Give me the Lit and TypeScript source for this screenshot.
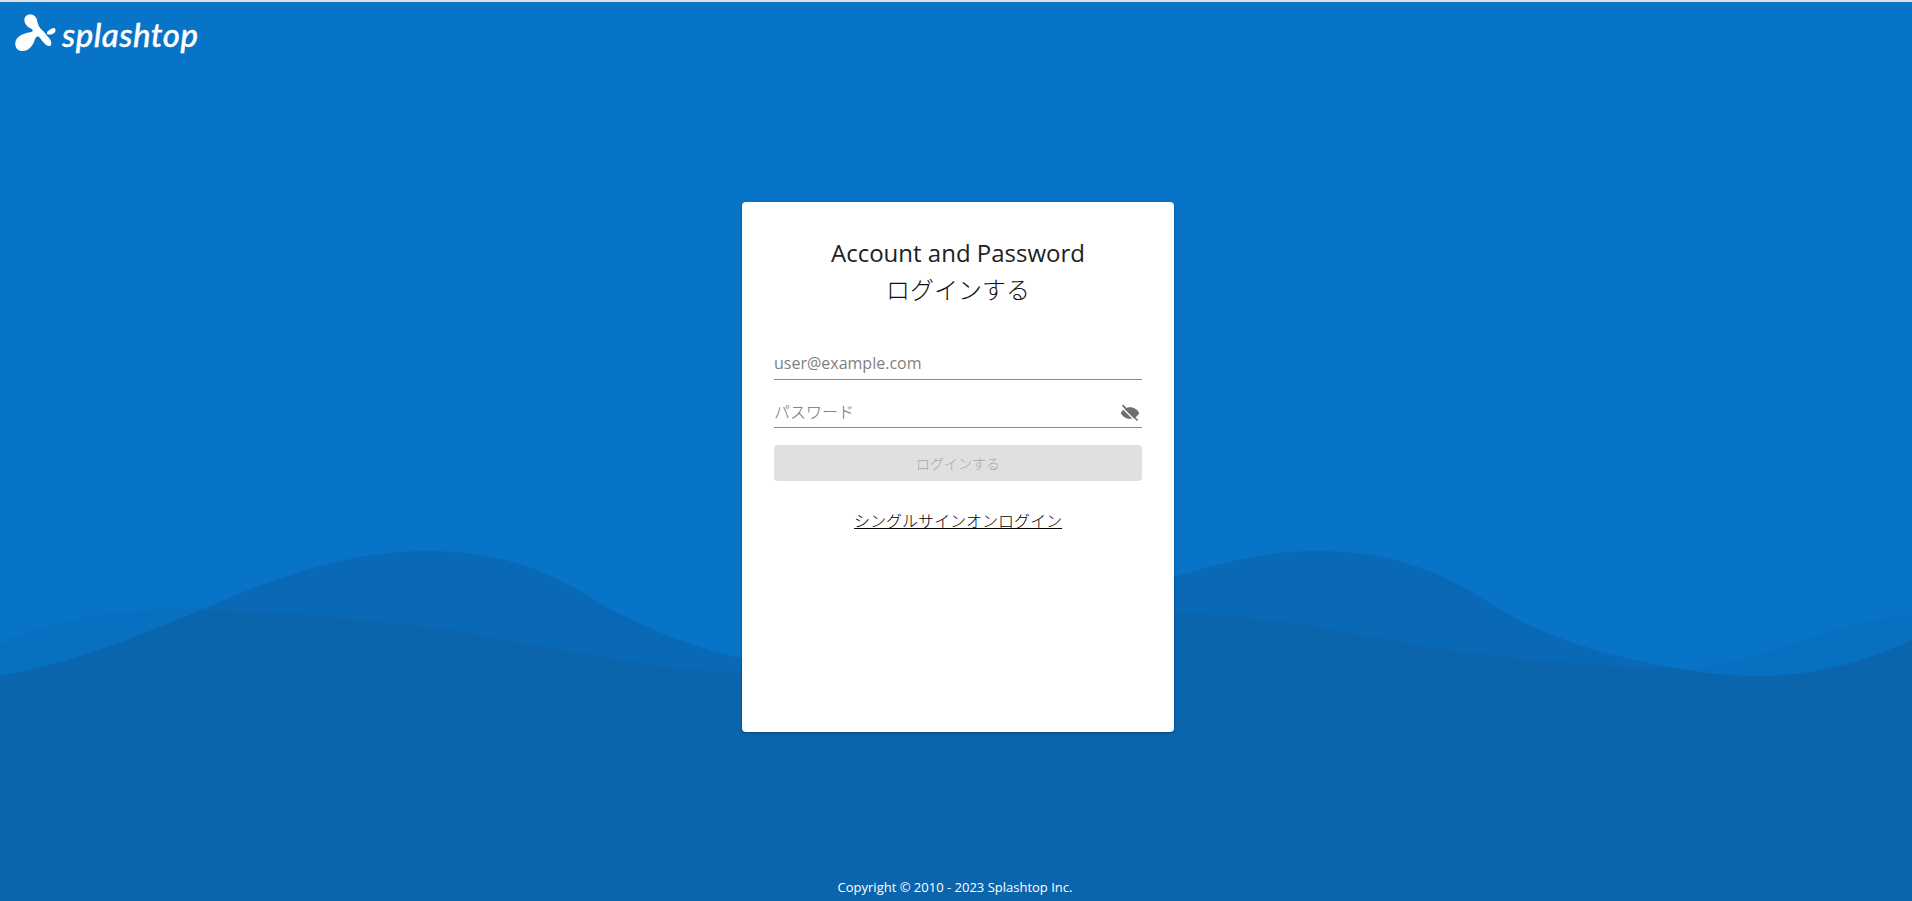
import { LitElement, html, css } from "lit";
import { customElement } from "lit/decorators.js";

@customElement("app-root")
export class AppRoot extends LitElement {
  static styles = css`
    :host {
      display: block;
      font-family: "Open Sans", "Noto Sans CJK JP", sans-serif;
    }
    .page {
      position: relative;
      height: 901px;
      box-sizing: border-box;
      border-top: 2px solid #dedede;
      background: #0874c8;
      overflow: hidden;
      display: flex;
      flex-direction: column;
      align-items: center;
    }
    .waves {
      position: absolute;
      left: 0;
      top: -2px;
      width: 1912px;
      height: 901px;
    }
    .logo {
      position: absolute;
      left: 15px;
      top: 12px;
      display: flex;
      align-items: center;
      gap: 5px;
      color: #fff;
    }
    .word {
      font-family: Lato, sans-serif;
      font-style: italic;
      font-weight: 500;
      font-size: 33px;
      line-height: 36px;
      letter-spacing: 0.5px;
      -webkit-text-stroke: 0.4px #fff;
    }
    .jp {
      font-family: "Noto Sans CJK JP", sans-serif;
      font-weight: 300;
    }
    .card {
      position: relative;
      margin-top: 200px;
      margin-left: 4px;
      width: 432px;
      height: 530px;
      box-sizing: border-box;
      padding: 33px 32px 32px;
      background: #fff;
      border-radius: 4px;
      box-shadow: 0 1px 3px rgba(0, 0, 0, 0.3);
      display: flex;
      flex-direction: column;
    }
    .title {
      margin: 0;
      text-align: center;
      font-size: 24px;
      font-weight: 400;
      line-height: 36px;
      color: #212121;
    }
    .title .jp {
      color: #111;
    }
    .field {
      display: flex;
      align-items: center;
      height: 32px;
      border-bottom: 1px solid #8c8c8c;
      font-size: 16px;
      color: #808080;
    }
    .field span {
      flex: 1;
    }
    .field .jp {
      color: #6e6e6e;
    }
    .field svg {
      margin: 3px 2px 0 0;
    }
    .user {
      margin-top: 39px;
    }
    .pass {
      margin-top: 15px;
    }
    .btn {
      margin-top: 17px;
      height: 36px;
      border-radius: 4px;
      background: #e0e0e0;
      color: #a6a6a6;
      font-size: 14px;
      display: flex;
      align-items: center;
      justify-content: center;
    }
    .sso {
      margin-top: 27px;
      align-self: center;
      font-size: 16px;
      line-height: 24px;
      color: #000;
      text-decoration: underline;
    }
    .copy {
      position: absolute;
      left: 0;
      right: 2px;
      top: 875px;
      text-align: center;
      font-size: 13px;
      line-height: 20px;
      color: #fff;
    }
  `;

  render() {
    return html`
      <div class="page">
        <svg class="waves" viewBox="0 0 1912 901">
          <path fill="#0870c0" d="M0 644 C60 615 125 610 194 608 C280 606 370 618 436 628 C540 644 640 668 742 674 C820 678 900 668 1000 650 C1060 622 1110 614 1174 613 C1240 615 1300 623 1352 633 C1440 650 1510 668 1592 674 C1630 676 1660 674 1688 670 C1720 664 1750 657 1783 647 C1830 630 1870 619 1912 614 L1912 901 L0 901 Z"/>
          <path fill="#0a69b6" d="M0 676 C70 664 130 640 201 610 C290 570 360 551 427 551 C500 551 550 570 606 607 C650 630 700 650 742 658 C820 670 950 660 1174 577 C1230 560 1270 551 1318 551 C1390 551 1440 570 1496 607 C1550 640 1620 660 1688 670 C1710 674 1735 676 1760 676 C1810 676 1860 665 1912 640 L1912 901 L0 901 Z"/>
          <path fill="#0b65ad" d="M0 676 C70 664 130 640 201 610 C260 610 350 618 436 628 C540 644 640 668 742 674 C820 678 1060 622 1174 613 C1240 615 1300 623 1352 633 C1440 650 1510 662 1688 670 C1710 674 1735 676 1760 676 C1810 676 1860 665 1912 640 L1912 901 L0 901 Z"/>
        </svg>

        <div class="logo">
          <svg width="42" height="40" viewBox="14 14 42 40">
            <path fill="#fff" d="M25 16 C29 13 35 15 36 20 C37 25 38 27 41 30 C44 32 45 35 48 38 C51 41 51 46 48 46 C45 46 42 42 39 38 C37 36 36 36 34 39 C32 46 27 52 20 51 C15 50 13 45 15 40 C18 35 24 33 30 32 C33 31 32 30 29 28 C25 26 21 20 25 16 Z"/>
            <path fill="#fff" d="M46 32 C48 30 51 28 53 28 C55 28 55 32 53 33 C51 35 47 35 46 34 Z"/>
          </svg>
          <span class="word">splashtop</span>
        </div>

        <div class="card">
          <h1 class="title">Account and Password<br /><span class="jp">ログインする</span></h1>
          <div class="field user"><span>user@example.com</span></div>
          <div class="field pass">
            <span class="jp">パスワード</span>
            <svg width="20" height="20" viewBox="0 0 24 24">
              <path fill="#6e6e6e" d="M12 5C7 5 2.7 8 1 12c1.7 4 6 7 11 7s9.3-3 11-7c-1.7-4-6-7-11-7z"/>
              <path stroke="#fff" stroke-width="1.6" d="M1.5 4.5 L18 21"/>
              <path stroke="#6e6e6e" stroke-width="2" d="M3 2.5 L21 21"/>
            </svg>
          </div>
          <div class="btn jp">ログインする</div>
          <div class="sso jp">シングルサインオンログイン</div>
        </div>

        <div class="copy">Copyright © 2010 - 2023 Splashtop Inc.</div>
      </div>
    `;
  }
}
